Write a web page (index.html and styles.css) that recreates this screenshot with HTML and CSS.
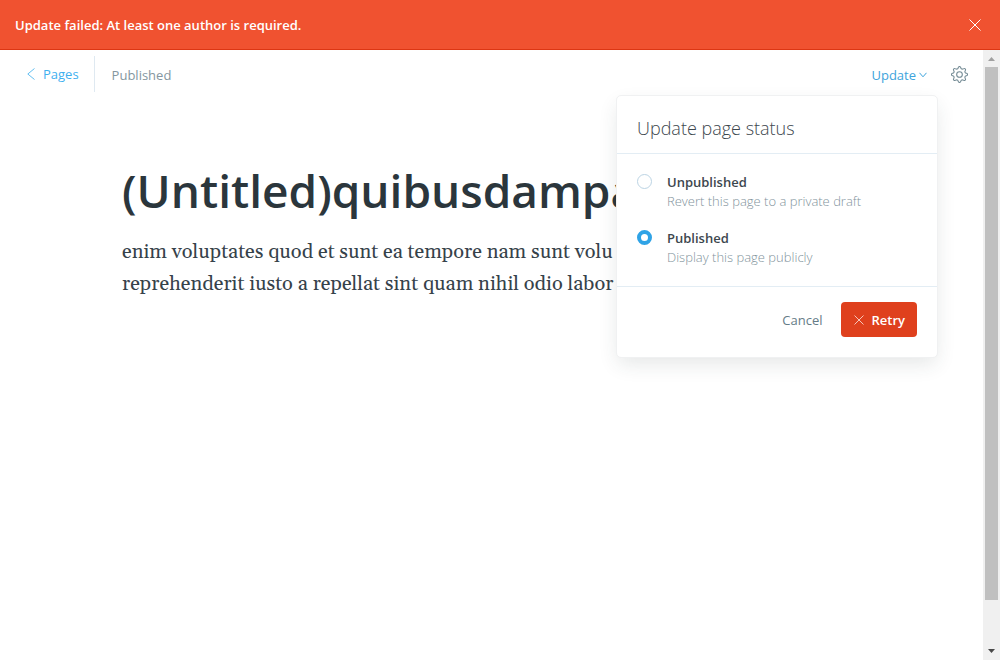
FILE: index.html
```html
<!DOCTYPE html>
<html lang="en">
<head>
<meta charset="utf-8">
<meta name="viewport" content="width=device-width, initial-scale=1">
<title>Editor</title>
<link rel="stylesheet" href="styles.css">
</head>
<body>
<div class="app">
  <div class="alert" role="alert">
    <span>Update failed: At least one author is required.</span>
    <button class="alert-close" type="button" aria-label="Close">
      <svg width="12" height="12" viewBox="0 0 12 12"><path d="M.5.5l11 11M11.5.5l-11 11"/></svg>
    </button>
  </div>
  <div class="viewport">
    <main class="editor">
      <header class="toolbar">
        <a class="back" href="#">
          <svg width="8" height="12" viewBox="0 0 8 12"><path d="M7.500.5L.8 6l6.700 5.500"/></svg>
          <span>Pages</span>
        </a>
        <span class="state">Published</span>
        <div class="publish">
          <button class="publish-trigger" type="button" aria-expanded="true">
            <span>Update</span>
            <svg width="8" height="6" viewBox="0 0 8 6"><path d="M.5.8L4 4.800 7.500.8"/></svg>
          </button>
          <form class="menu">
            <h2 class="menu-title">Update page status</h2>
            <div class="options">
              <div class="option">
                <input class="radio" type="radio" name="status" id="unpublished">
                <label for="unpublished"><span class="option-name">Unpublished</span><span class="option-hint">Revert this page to a private draft</span></label>
              </div>
              <div class="option">
                <input class="radio" type="radio" name="status" id="published" checked>
                <label for="published"><span class="option-name">Published</span><span class="option-hint">Display this page publicly</span></label>
              </div>
            </div>
            <div class="actions">
              <button class="cancel" type="button">Cancel</button>
              <button class="retry" type="button">
                <svg width="10" height="10" viewBox="0 0 10 10"><path d="M.5.5l9 9M9.500.5l-9 9"/></svg>
                <span>Retry</span>
              </button>
            </div>
          </form>
        </div>
        <button class="settings" type="button" aria-label="Settings">
          <svg width="17" height="17" viewBox="0 0 24 24"><circle cx="12" cy="12" r="4"/><path d="M13.600 2.900c-.5-1.600-2.700-1.600-3.200 0l-.3.900a2.200 2.200 0 0 1-3.200 1.300L6 4.700C4.500 3.900 2.900 5.500 3.700 7l.4.900a2.200 2.200 0 0 1-1.300 3.200l-.9.300c-1.600.5-1.600 2.700 0 3.200l.9.300a2.200 2.200 0 0 1 1.300 3.200l-.4.900c-.8 1.500.8 3.100 2.300 2.300l.9-.4a2.200 2.200 0 0 1 3.200 1.300l.3.900c.5 1.600 2.700 1.600 3.200 0l.3-.9a2.200 2.200 0 0 1 3.200-1.300l.9.400c1.500.8 3.100-.8 2.300-2.300l-.4-.9a2.200 2.200 0 0 1 1.300-3.200l.9-.3c1.600-.5 1.600-2.700 0-3.200l-.9-.3a2.200 2.200 0 0 1-1.300-3.200l.4-.9c.8-1.500-.8-3.100-2.300-2.300l-.9.400a2.200 2.200 0 0 1-3.200-1.300z" transform="translate(0 -1)"/></svg>
        </button>
      </header>
      <article class="content">
        <h1 class="title">(Untitled)quibusdampa</h1>
        <p class="text">enim voluptates quod et sunt ea tempore nam sunt volu<br>reprehenderit iusto a repellat sint quam nihil odio labor</p>
      </article>
    </main>
    <div class="scrollbar" aria-hidden="true">
      <svg class="arrow-up" width="17" height="17" viewBox="0 0 17 17"><path d="M5 11h7L8.500 7z"/></svg>
      <div class="track"><div class="thumb"></div></div>
      <svg class="arrow-down" width="17" height="17" viewBox="0 0 17 17"><path d="M5 6h7l-3.500 4z"/></svg>
    </div>
  </div>
</div>
</body>
</html>
```
FILE: styles.css
```css
* { box-sizing: border-box; }
body { margin: 0; background: #fff; color: #3d474e; font-family: "Open Sans", "Noto Sans", sans-serif; font-size: 13px; line-height: 20px; }
button { margin: 0; padding: 0; border: 0; background: none; font: inherit; cursor: pointer; }
svg { display: block; fill: none; stroke: currentColor; stroke-width: 1; }

.app { display: flex; flex-direction: column; height: 100vh; }
.alert { display: flex; flex: none; align-items: center; justify-content: space-between; padding: 15px 18px 14px 15px; border-bottom: 1px solid #dc3613; background: #f05230; color: #fff; font-weight: 600; }
.alert-close { padding: 1px; color: #fff; }

.viewport { display: flex; flex: 1; min-height: 0; }
.editor { flex: 1; min-width: 0; }
.toolbar { display: flex; align-items: center; padding: 6px 15px 0 27px; }
.back { display: flex; align-items: center; gap: 8px; height: 36px; padding-right: 15px; border-right: 1px solid #dfe9f1; color: #3eb0ef; text-decoration: none; }
.back svg { opacity: .8; }
.state { padding: 2px 0 0 17px; color: #8496a0; }
.publish { position: relative; margin-left: auto; padding-top: 2px; }
.publish-trigger { display: flex; align-items: center; gap: 3px; color: #3ea4dc; }
.settings { margin-left: 24px; color: #738a94; }
.settings svg { stroke-width: 1.5; }

.menu { position: absolute; top: 32px; right: -11px; z-index: 1; width: 322px; border: 1px solid #f0f1f2; border-radius: 5px; background: #fff; box-shadow: 0 8px 20px -2px rgba(40, 55, 60, .12); }
.menu-title { margin: 0; padding: 20px 20px 13px; border-bottom: 1px solid #e3edf4; font-size: 18px; font-weight: 300; line-height: 24px; }
.options { display: flex; flex-direction: column; gap: 18px; padding: 19px 20px; border-bottom: 1px solid #e3edf4; }
.option { display: flex; gap: 15px; }
.option label { display: flex; flex-direction: column; }
.option-name { font-weight: 600; line-height: 19px; }
.option-hint { color: #82939c; font-weight: 300; line-height: 19px; }
.radio { flex: none; width: 15px; height: 15px; margin: 1px 0 0; border: 1px solid #bcd4e4; border-radius: 50%; background: #fff; appearance: none; }
.radio:checked { border: 4px solid #2fa3e6; }
.actions { display: flex; align-items: center; justify-content: flex-end; gap: 19px; padding: 15px 20px 20px; }
.cancel { color: #667c87; }
.retry { display: flex; align-items: center; gap: 7px; padding: 8px 12px 7px 13px; border-radius: 4px; background: #df401d; color: #fff; font-weight: 600; }
.retry svg { stroke-width: .7; }

.content { padding: 66px 40px 0 122px; }
.title { margin: 0; color: #2b363c; font-size: 46px; font-weight: 600; line-height: 64px; white-space: nowrap; }
.text { margin: 14px 0 0; color: #36424a; font-family: Gelasio, "Liberation Serif", serif; font-size: 20px; line-height: 32px; white-space: nowrap; }

.scrollbar { display: flex; flex: none; flex-direction: column; width: 17px; background: #f0f0f0; }
.scrollbar svg { stroke: none; }
.arrow-up { fill: #a0a0a0; }
.arrow-down { fill: #484848; }
.track { flex: 1; padding: 0 2px; }
.thumb { height: 92.500%; background: #c0c0c0; }
```
